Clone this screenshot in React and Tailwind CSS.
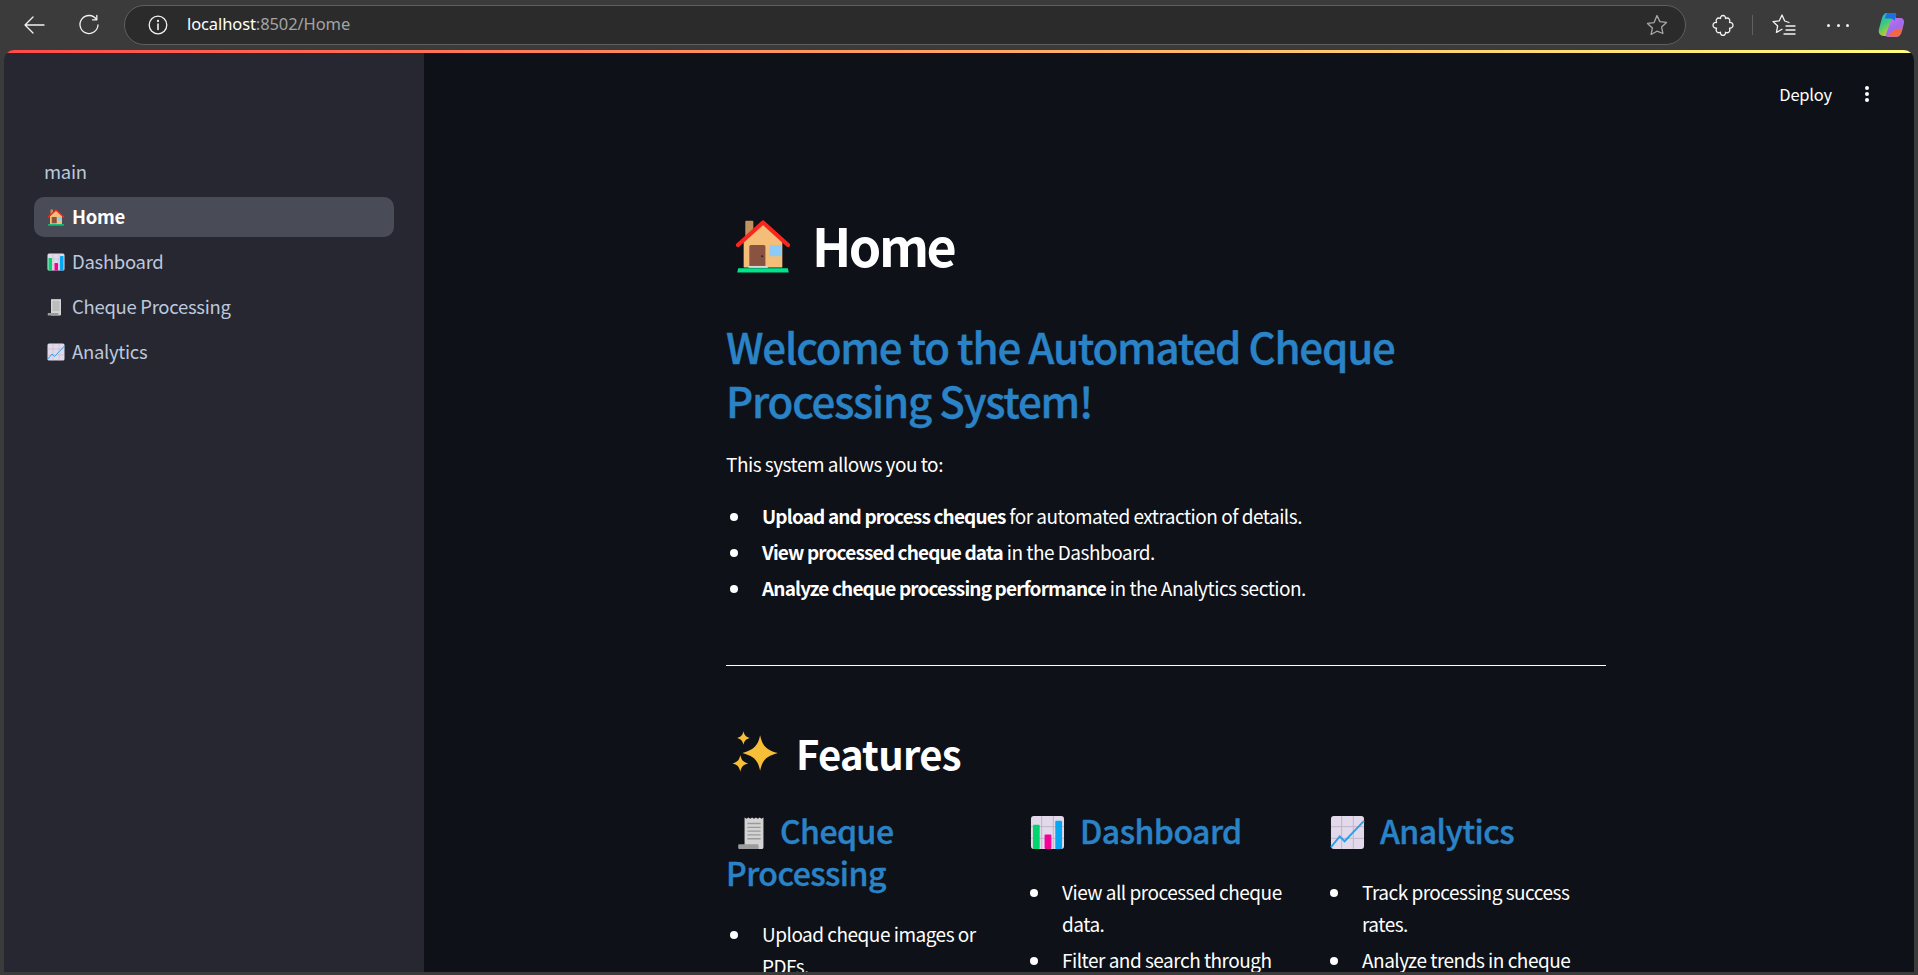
const House = ({ s = 20 }) => (
  <svg width={s} height={s} viewBox="0 0 36 36" className="shrink-0">
    <rect x="7" y="3" width="5" height="11" rx="0.5" fill="#C1915E" />
    <path d="M6 16 18 5l12 11v16H6z" fill="#F4BE78" />
    <rect x="9.5" y="18" width="10" height="13.5" rx="1" fill="#8A5240" />
    <circle cx="17.5" cy="25" r="0.6" fill="#222" />
    <rect x="22" y="18" width="7.5" height="7" rx="0.6" fill="#8CCBF7" />
    <rect x="9" y="31" width="12" height="1.2" fill="#D8D8D8" />
    <path d="M2.5 18 18 4l15.500 14" fill="none" stroke="#F9261E" strokeWidth="2.600" strokeLinecap="round" strokeLinejoin="round" />
    <path d="M2 35 2.600 32.500h30.800L34 35z" fill="#00E58A" />
  </svg>
);
const Chart = ({ s = 20 }) => (
  <svg width={s} height={s} viewBox="0 0 36 36" className="shrink-0">
    <rect x="1" y="1" width="34" height="34" rx="3" fill="#E2DAEB" />
    <path d="M1 12h34M1 24h34M12 1v34M24 1v34" stroke="#BDB6C6" strokeWidth="1" />
    <rect x="3" y="10" width="7" height="25" rx="1" fill="#00D66F" />
    <rect x="15" y="20" width="7" height="15" rx="1" fill="#F5009B" />
    <rect x="26" y="6" width="7" height="29" rx="1" fill="#08A7F3" />
  </svg>
);
const Graph = ({ s = 20 }) => (
  <svg width={s} height={s} viewBox="0 0 36 36" className="shrink-0">
    <rect x="1" y="1" width="34" height="34" rx="3" fill="#E2DAEB" />
    <path d="M1 12h34M1 24h34M12 1v34M24 1v34" stroke="#BDB6C6" strokeWidth="1" />
    <path d="M1 33 10 22l5 5L35 6" fill="none" stroke="#2F9FEA" strokeWidth="2" />
  </svg>
);
const Receipt = ({ s = 20 }) => (
  <svg width={s} height={s} viewBox="0 0 36 36" className="shrink-0">
    <path d="M8 1.500 10 3l2-1.500L14 3l2-1.500L18 3l2-1.500L22 3l2-1.500L26 3l2-1.500V33a2 2 0 0 1-2 2H8z" fill="#D3D3D3" />
    <path d="M11 8h14M11 12h14M11 16h14M11 20h14M11 24h14" stroke="#9A9A9A" strokeWidth="1.500" />
    <path d="M2 35c-1 0-1-5 0-5h20c1 0 1 5 1 5z" fill="#9C9C9C" />
  </svg>
);
const Sparkles = ({ s = 48 }) => (
  <svg width={s} height={s} viewBox="0 0 48 48" className="shrink-0">
    <g fill="#F7BE38">
      <path d="M27 7c2 10 6 14 17 17-11 3-15 7-17 17-2-10-6-14-17-17 11-3 15-7 17-17z" />
      <path d="M11 3c1 4 2.500 5.500 6 6.500-3.500 1-5 2.500-6 6.500-1-4-2.500-5.500-6-6.500 3.500-1 5-2.500 6-6.500z" />
      <path d="M8 26c1 5 3 7 7.500 8-4.500 1-6.500 3-7.500 8-1-5-3-7-7.500-8 4.500-1 6.500-3 7.500-8z" />
    </g>
  </svg>
);
const Copilot = () => (
  <svg width="28" height="28" viewBox="0 0 28 28">
    <defs>
      <linearGradient id="cpa" x1="0" y1="0" x2="0.6" y2="1">
        <stop offset="0" stopColor="#1FA8E8" />
        <stop offset="0.5" stopColor="#3FCB7A" />
        <stop offset="1" stopColor="#F5C518" />
      </linearGradient>
      <linearGradient id="cpb" x1="0.2" y1="0" x2="0.8" y2="1">
        <stop offset="0" stopColor="#D66BE8" />
        <stop offset="0.5" stopColor="#9B6BF0" />
        <stop offset="1" stopColor="#F06A6A" />
      </linearGradient>
    </defs>
    <path d="M10 2h7c2 0 2.500 1.500 2 3L14 22c-.6 2-2 3-4 3H7c-4 0-6-3-5-7l3-11c.8-3 2.500-5 5-5z" fill="url(#cpa)" />
    <path d="M15 7h8c3 0 4.500 2 4 5l-2 8c-1 4-3 6-6 6h-8c-2 0-2.500-1-2-3l5-13c.4-2 .8-3 1-3z" fill="url(#cpb)" />
    <path d="M11 2h6c2 0 2.500 1.500 2 3l-1.500 5c-1-2-3-2.500-5-2.500H8C8.500 4 9.500 2 11 2z" fill="#1C6FE0" />
    <path d="M10 25h9c2 0 3.500-1 4.500-3l1-3h-6c-2 0-3 1-3.500 2.500z" fill="#F2683A" />
  </svg>
);

const iconStroke = { fill: "none", stroke: "#f2f2f2", strokeWidth: 1.3, strokeLinecap: "round", strokeLinejoin: "round" };

function Toolbar() {
  return (
    <div className="flex h-[50px] shrink-0 items-center bg-[#3b3b3b] font-['Noto_Sans']">
      <svg width="24" height="24" viewBox="0 0 24 24" className="ml-[22px]" {...iconStroke}>
        <path d="M22 12H3M11 4l-8 8 8 8" />
      </svg>
      <svg width="22" height="22" viewBox="0 0 22 22" className="ml-[32px]" {...iconStroke}>
        <path d="M18.500 5.500A9 9 0 1 0 20 11" />
        <path d="M18.800 1.500v4.300h-4.300" />
      </svg>
      <div className="ml-[24px] flex h-[40px] w-[1562px] items-center rounded-full border border-[#5f5f5f] bg-[#2b2b2b] pl-[23px] pr-[17px]">
        <svg width="20" height="20" viewBox="0 0 20 20" {...iconStroke}>
          <circle cx="10" cy="10" r="8.800" />
          <path d="M10 9v5.500" strokeWidth="1.600" />
          <circle cx="10" cy="6" r="0.500" />
        </svg>
        <span className="mb-[2px] ml-[19px] text-[16.500px] tracking-[-0.1px] text-white">localhost<span className="text-[#a3a3a3]">:8502/Home</span></span>
        <svg width="22" height="22" viewBox="0 0 22 22" className="ml-auto" fill="none" stroke="#a8a8a8" strokeWidth="1.300" strokeLinejoin="round">
          <path d="m11 1.500 2.900 6.100 6.600.8-4.900 4.500 1.300 6.600L11 17.200l-5.900 3.300 1.300-6.600-4.900-4.500 6.600-.8z" />
        </svg>
      </div>
      <svg width="22" height="22" viewBox="0 0 22 22" className="ml-[26px]" {...iconStroke}>
        <path d="M8.500 4.500C8.300 2.800 9.500 1.500 11 1.500s2.800 1.300 2.500 3c1.500-.8 3-.6 3.800.6.700 1 .6 2.200.2 3.400 1.900-.3 3.500.9 3.500 2.800 0 2-1.600 3.200-3.500 2.900.4 1.200.5 2.400-.2 3.400-.8 1.200-2.300 1.400-3.800.6.300 1.700-1 3.300-2.500 3.300s-2.800-1.500-2.500-3.300c-1.500.8-3 .6-3.800-.6-.7-1-.6-2.200-.2-3.400-1.900.3-3.500-.9-3.500-2.900s1.600-3.100 3.500-2.800c-.4-1.200-.5-2.400.2-3.400.8-1.200 2.300-1.400 3.800-.6z" />
      </svg>
      <div className="ml-[18px] h-[20px] w-px bg-[#5f5f5f]" />
      <svg width="24" height="24" viewBox="0 0 24 24" className="ml-[19px]" {...iconStroke}>
        <path d="M17 9.500 12.700 8 10 2 7.300 7.800l-6.300.8 4.700 4.300-1.300 6.500 5.600-3.100" />
        <path d="M14 13h9M14 17h9M12 21h11" />
      </svg>
      <div className="ml-[31px] flex w-[22px] justify-between">
        <span className="h-[3px] w-[3px] rounded-full bg-[#f2f2f2]" />
        <span className="h-[3px] w-[3px] rounded-full bg-[#f2f2f2]" />
        <span className="h-[3px] w-[3px] rounded-full bg-[#f2f2f2]" />
      </div>
      <div className="ml-[28px]"><Copilot /></div>
    </div>
  );
}

function NavItem({ icon, label, active }) {
  return (
    <div className={`flex h-[40px] items-center gap-[7px] rounded-[10px] pl-[13px] text-[18.500px] tracking-[-0.3px] ${active ? "bg-[#494b56] font-bold text-white" : "text-[#bcc8dc]"}`}>
      {icon}
      <span>{label}</span>
    </div>
  );
}

function Sidebar() {
  return (
    <aside className="flex w-[420px] shrink-0 flex-col bg-[#262730] px-[30px] pt-[101px]">
      <div className="h-[43px] pl-[10px] text-[18.500px] leading-[34px] tracking-[-0.3px] text-[#bcc8dc]">main</div>
      <div className="flex flex-col gap-[5px]">
        <NavItem active icon={<House s={18} />} label="Home" />
        <NavItem icon={<Chart s={18} />} label="Dashboard" />
        <NavItem icon={<Receipt s={18} />} label="Cheque Processing" />
        <NavItem icon={<Graph s={18} />} label="Analytics" />
      </div>
    </aside>
  );
}

function Li({ children }) {
  return (
    <li className="mb-[4px] flex">
      <span className="mt-[13px] ml-[4px] h-[8px] w-[8px] shrink-0 rounded-full bg-white" />
      <span className="ml-[24px]">{children}</span>
    </li>
  );
}

function Column({ icon, title, items, pad }) {
  return (
    <div>
      <h3 className="mb-[25px] text-[32px] leading-[42px] font-medium tracking-[-0.55px] text-[#2a83c6] [-webkit-text-stroke:0.4px_#2a83c6]">
        <span className={`inline-block align-[-6px] ${pad ? "mr-[9px] pl-[11px]" : "mr-[15px] pl-[4px]"}`}>{icon}</span>
        {title}
      </h3>
      <ul>
        {items.map((t) => <Li key={t}>{t}</Li>)}
      </ul>
    </div>
  );
}

function Main() {
  return (
    <main className="min-w-0 flex-1 overflow-hidden bg-[#0e1117] text-white">
      <div className="flex h-[53px] items-end justify-end pr-[45px]">
        <span className="text-[16.500px] leading-[24px] tracking-[-0.2px]">Deploy</span>
        <span className="mb-[4px] ml-[33px] flex flex-col gap-[2px]">
          <span className="h-[4px] w-[4px] rounded-full bg-white" />
          <span className="h-[4px] w-[4px] rounded-full bg-white" />
          <span className="h-[4px] w-[4px] rounded-full bg-white" />
        </span>
      </div>
      <div className="ml-[302px] w-[880px] pt-[106px]">
        <h1 className="flex h-[66px] items-center text-[52px] leading-[66px] font-bold tracking-[-2.500px]">
          <span className="ml-[8px] mr-[20px]"><House s={58} /></span>
          Home
        </h1>
        <h2 className="mt-[41px] w-[800px] text-[42px] leading-[54px] font-medium tracking-[-1.200px] text-[#2a83c6] [-webkit-text-stroke:0.4px_#2a83c6]">
          Welcome to the Automated Cheque Processing System!
        </h2>
        <p className="mt-[21px] text-[19px] leading-[32px] tracking-[-0.5px]">This system allows you to:</p>
        <ul className="mt-[20px] text-[19px] leading-[32px] tracking-[-0.5px]">
          <Li><b className="font-bold tracking-[-0.85px]">Upload and process cheques</b> for automated extraction of details.</Li>
          <Li><b className="font-bold tracking-[-0.85px]">View processed cheque data</b> in the Dashboard.</Li>
          <Li><b className="font-bold tracking-[-0.85px]">Analyze cheque processing performance</b> in the Analytics section.</Li>
        </ul>
        <hr className="mt-[61px] border-0 border-t border-white" />
        <h2 className="mt-[60px] flex h-[54px] items-center text-[40px] leading-[54px] font-semibold tracking-[-0.7px]">
          <span className="ml-[6px] mr-[14px]"><Sparkles s={50} /></span>
          Features
        </h2>
        <div className="mt-[29px] grid grid-cols-3 gap-[20px] text-[19px] leading-[32px] tracking-[-0.5px]">
          <Column pad icon={<Receipt s={34} />} title="Cheque Processing" items={["Upload cheque images or PDFs.", "Automated extraction of details."]} />
          <Column icon={<Chart s={35} />} title="Dashboard" items={["View all processed cheque data.", "Filter and search through records."]} />
          <Column icon={<Graph s={35} />} title="Analytics" items={["Track processing success rates.", "Analyze trends in cheque processing."]} />
        </div>
      </div>
    </main>
  );
}

export default function App() {
  return (
    <div className="flex h-[975px] w-[1918px] flex-col overflow-hidden bg-[#3b3b3b] font-['Noto_Sans_CJK_SC','Noto_Sans',sans-serif]">
      <Toolbar />
      <div className="mx-[4px] mb-[3px] flex min-h-0 flex-1 flex-col overflow-hidden rounded-t-[10px]">
        <div className="h-[3px] shrink-0 bg-[linear-gradient(90deg,#ff4b4b,#fffd80)]" />
        <div className="flex min-h-0 flex-1">
          <Sidebar />
          <Main />
        </div>
      </div>
    </div>
  );
}
